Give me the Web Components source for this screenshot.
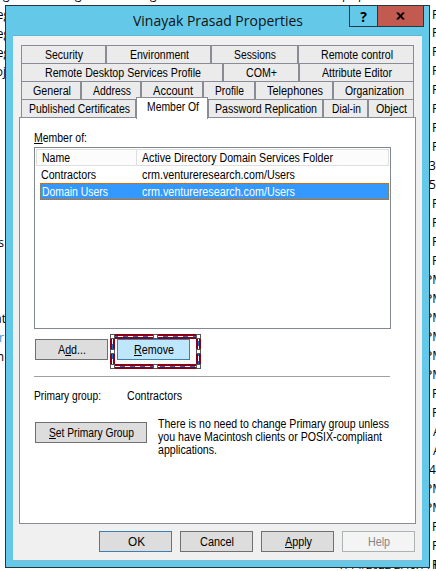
<!DOCTYPE html>
<html lang="en"><head><meta charset="utf-8"><title>Vinayak Prasad Properties</title>
<style>html,body{margin:0;background:#fff;overflow:hidden}body{width:436px;height:571px;font:12px "Liberation Sans",sans-serif;color:#000}</style></head>
<body><app-desktop></app-desktop>
<script>
const define=(name,html,init)=>customElements.define(name,class extends HTMLElement{
  connectedCallback(){
    if(this.shadowRoot)return;
    this.attachShadow({mode:'open'}).innerHTML=html;
    if(init)init.call(this,this.shadowRoot);
  }
});

// A single line of text condensed to a given width.
define('fit-text',`<style>:host{display:inline-block;white-space:pre;text-align:left;line-height:14px;height:14px;flex:none}
span{display:inline-block;transform-origin:0 50%}::slotted(u){text-decoration:underline;text-underline-offset:1px;text-decoration-thickness:1px;text-decoration-skip-ink:none}</style><span><slot></slot></span>`,function(r){
  const w=+this.getAttribute('w'),s=r.querySelector('span');
  const n=s.getBoundingClientRect().width;
  this.style.width=w+'px';
  if(n)s.style.transform='scaleX('+(w+1)/n+')';
});

define('push-button',`<style>:host{display:flex;box-sizing:border-box;width:73px;height:21px;border:1px solid #707070;background:#ddd;align-items:center;justify-content:center;flex:none}
:host([kind=default]){border-color:#3c7fb1}
:host([kind=hot]){border-color:#3c7fb1;background:#bee6fd}
:host([kind=off]){border-color:#adb2b5;background:#f4f4f4;color:#838383}</style><slot></slot>`);

define('tab-item',`<style>:host{display:flex;box-sizing:border-box;width:var(--w);height:18px;border:1px solid #898c95;border-bottom:0;background:#ebebeb;align-items:center;justify-content:center;padding-top:1px;flex:none}
:host([selected]){height:22px;margin-top:-2px;margin-bottom:-2px;background:#fff;position:relative;padding-bottom:4px}</style><slot></slot>`,
function(){this.style.setProperty('--w',this.getAttribute('w')+'px')});

define('tab-row',`<style>:host{display:flex;height:18px;margin:0 2px;width:393px}</style><slot></slot>`);

define('list-view',`<style>:host{display:block;box-sizing:border-box;width:357px;height:182px;border:1px solid #828790;padding:1px;background:#fff}
.h{display:flex;height:17px;box-sizing:border-box;border:1px solid #dedfe1;background:#fcfcfc}
.h div{box-sizing:border-box;padding:1px 0 0 5px}.h div:first-child{width:100px;border-right:1px solid #dedfe1}
.r{display:flex;box-sizing:border-box;height:17px;margin-left:4px;padding:2px 0 0 1px}
.r div:first-child{width:101px}
.s{color:#fff;background:repeating-linear-gradient(90deg,#cc6600 0 1px,#39f 1px 2px) 0 0/100% 1px no-repeat,repeating-linear-gradient(90deg,#cc6600 0 1px,#39f 1px 2px) 0 100%/100% 1px no-repeat,repeating-linear-gradient(#cc6600 0 1px,#39f 1px 2px) 0 0/1px 100% no-repeat,repeating-linear-gradient(#cc6600 0 1px,#39f 1px 2px) 100% 0/1px 100% no-repeat,#39f}
.s div:first-child{box-sizing:border-box;padding-left:1px}</style>
<div class="h"><div><fit-text w="27">Name</fit-text></div><div><fit-text w="190">Active Directory Domain Services Folder</fit-text></div></div>
<div class="r"><div><fit-text w="54">Contractors</fit-text></div><fit-text w="152">crm.ventureresearch.com/Users</fit-text></div>
<div class="r s"><div><fit-text w="65">Domain Users</fit-text></div><fit-text w="152">crm.ventureresearch.com/Users</fit-text></div>`);

// Annotation frame with selection handles, laid over the highlighted button.
define('mark-frame',`<style>:host{position:absolute;left:-7px;top:-5px;width:91px;height:35px}svg{display:block}</style>
<svg width="91" height="35" shape-rendering="crispEdges"><g fill="none"><rect x="2.5" y="2.5" width="86" height="30" stroke="#870018" stroke-width="5"/><rect x="2.5" y="2.5" width="86" height="30" stroke="#fff"/><rect x="2.5" y="2.5" width="86" height="30" stroke="#0b74cf" stroke-dasharray="5 5"/></g>
<g fill="#fff" stroke="#555"><rect x=".5" y=".5" width="4" height="4"/><rect x="43.5" y=".5" width="4" height="4"/><rect x="86.5" y=".5" width="4" height="4"/><rect x=".5" y="15.5" width="4" height="4"/><rect x="86.5" y="15.5" width="4" height="4"/><rect x=".5" y="30.5" width="4" height="4"/><rect x="43.5" y="30.5" width="4" height="4"/><rect x="86.5" y="30.5" width="4" height="4"/></g></svg>`);

define('title-bar',`<style>:host{display:flex;height:29px;position:relative;justify-content:center;box-sizing:border-box}
.t{font:15px/20px "Open Sans","Noto Sans",sans-serif;padding-top:4px;color:#111}
.t fit-text{line-height:20px;height:20px}
.c{position:absolute;right:-2px;top:-1px;display:flex;box-sizing:border-box;width:75px;height:22px;border:1px solid #253840}
.c div{display:flex;align-items:center;justify-content:center;width:27px;border-right:1px solid #253840;font:bold 14px "Open Sans",sans-serif}
.c div+div{width:45px;background:#c35a50;border:0}</style>
<div class="t"><fit-text w="169">Vinayak Prasad Properties</fit-text></div>
<div class="c"><div>?</div><div><svg width="9" height="8" viewBox="0 0 10 8"><path d="M0 0h3l2 2.500L7 0h3L6.500 4 10 8H7L5 5.500 3 8H0l3.500-4z"/></svg></div></div>`);

define('properties-dialog',`<style>:host{display:block;box-sizing:border-box;width:425px;height:563px;border:1px solid #26343c;background:#64c9e9;padding:0 7px 7px}
.client{box-sizing:border-box;height:526px;width:409px;background:#f0f0f0;border-top:1px solid #5eb5d2;border-bottom:1px solid #84bdd0;padding:9px 6px 0}
.panel{box-sizing:border-box;width:397px;height:407px;border:1px solid #898c95;background:#fff;padding:13px 14px 0}
.lab{height:16px;display:flex}.btns{display:flex;gap:9px;margin:10px 0 0 1px}.rel{position:relative}
hr{border:0;height:1px;background:#a0a0a0;margin:16px 0 0;width:356px}
.pg{display:flex;margin-top:12px;height:14px}.pg fit-text:first-child{margin-right:27px}
.sp{display:flex;margin:15px 0 0 1px;gap:11px}.sp push-button{width:112px;margin-top:4px}
.note{display:flex;flex-direction:column}.note fit-text{height:13px;line-height:13px}
.foot{display:flex;gap:8px;margin:7px 0 0 80px}</style>
<title-bar></title-bar>
<div class="client">
<tab-row><tab-item w="85"><fit-text w="37">Security</fit-text></tab-item><tab-item w="105"><fit-text w="58">Environment</fit-text></tab-item><tab-item w="87"><fit-text w="41">Sessions</fit-text></tab-item><tab-item w="116"><fit-text w="71">Remote control</fit-text></tab-item></tab-row>
<tab-row><tab-item w="202"><fit-text w="155">Remote Desktop Services Profile</fit-text></tab-item><tab-item w="76"><fit-text w="30">COM+</fit-text></tab-item><tab-item w="115"><fit-text w="69">Attribute Editor</fit-text></tab-item></tab-row>
<tab-row><tab-item w="60"><fit-text w="37">General</fit-text></tab-item><tab-item w="60"><fit-text w="37">Address</fit-text></tab-item><tab-item w="62"><fit-text w="39">Account</fit-text></tab-item><tab-item w="52"><fit-text w="28">Profile</fit-text></tab-item><tab-item w="78"><fit-text w="55">Telephones</fit-text></tab-item><tab-item w="81"><fit-text w="58">Organization</fit-text></tab-item></tab-row>
<tab-row><tab-item w="115"><fit-text w="100">Published Certificates</fit-text></tab-item><tab-item w="72" selected><fit-text w="51">Member Of</fit-text></tab-item><tab-item w="115"><fit-text w="101">Password Replication</fit-text></tab-item><tab-item w="45"><fit-text w="28">Dial-in</fit-text></tab-item><tab-item w="46"><fit-text w="30">Object</fit-text></tab-item></tab-row>
<div class="panel">
<div class="lab"><fit-text w="52"><u>M</u>ember of:</fit-text></div>
<list-view></list-view>
<div class="btns"><push-button><fit-text w="27">A<u>d</u>d...</fit-text></push-button><div class="rel"><push-button kind="hot"><fit-text w="39"><u>R</u>emove</fit-text></push-button><mark-frame></mark-frame></div></div>
<hr>
<div class="pg"><fit-text w="66">Primary group:</fit-text><fit-text w="54">Contractors</fit-text></div>
<div class="sp"><push-button><fit-text w="84"><u>S</u>et Primary Group</fit-text></push-button><div class="note"><fit-text w="230">There is no need to change Primary group unless</fit-text><fit-text w="223">you have Macintosh clients or POSIX-compliant</fit-text><fit-text w="58">applications.</fit-text></div></div>
</div>
<div class="foot"><push-button kind="default"><fit-text w="16">OK</fit-text></push-button><push-button><fit-text w="33">Cancel</fit-text></push-button><push-button><fit-text w="26"><u>A</u>pply</fit-text></push-button><push-button kind="off"><fit-text w="21">Help</fit-text></push-button></div>
</div>`);

// Desktop: fragments of the list behind, with the dialog window on top.
define('app-desktop',`<style>:host{display:block;position:relative;width:436px;height:571px;overflow:hidden;background:#fff;font-family:"Liberation Sans",sans-serif}
.b{position:absolute;font:12px/18px "Open Sans","Noto Sans",sans-serif;white-space:pre}
properties-dialog{position:absolute;left:5px;top:5px}</style><div id="bg"></div><properties-dialog></properties-dialog>`,function(r){
  const bg=r.getElementById('bg');
  const put=(t,x,y,c,right)=>{const d=document.createElement('div');d.className='b';d.textContent=t;d.style.cssText=(right?'right:'+(436-x):'left:'+x)+'px;top:'+(y-9)+'px;color:'+(c||'#000');bg.append(d);return d};
  'P P P P P P P P 3 5 P P P P PM PM PM PM PM PM P P A A 4 PM PM P P P'.split(' ').forEach((t,i)=>{
    put(t,t==='PM'?425:/\d/.test(t)?429:t==='A'?433:432,14.500+i*18.970);
  });
  [['eg',15],['eg',34],['eg',53],['oj',72],['s',243],['at',319],['r',338,'#2498d8'],['n',357]].forEach(a=>put(a[0],a[0]==='eg'?10:a[0]==='r'||a[0]==='n'||a[0]==='s'?4:6,a[1],a[2],true));
  [['g',3],['g',75],['g',150],['p',342],['p',358]].forEach(a=>put(a[0],a[1],-5));
  put('7/14/2022 2:46:11 PM',339,565).style.fontSize='11px';
});
</script></body></html>
